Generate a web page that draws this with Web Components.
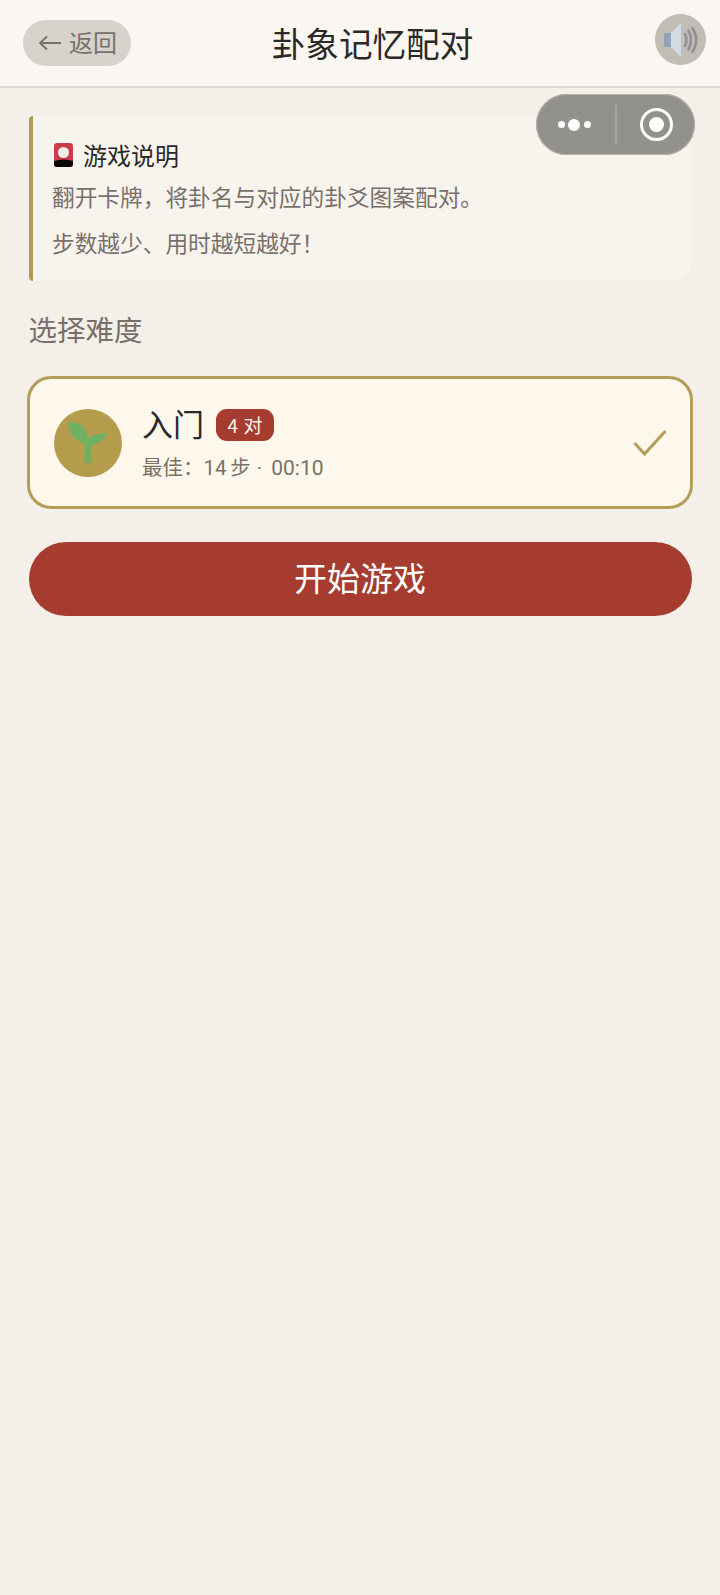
<!DOCTYPE html>
<html lang="zh"><head><meta charset="utf-8"><style>
html,body{margin:0;height:100%}
body{background:#f4f0e9;font-family:"Noto Sans CJK SC","Noto Sans",sans-serif;width:720px;min-height:1595px;position:relative}
</style></head><body>
<memory-app></memory-app>
<script>
function def(name,html){customElements.define(name,class extends HTMLElement{constructor(){super();this.attachShadow({mode:'open'}).innerHTML=html}})}
def('app-header',`<style>
:host{display:flex;box-sizing:border-box;height:88px;background:#faf7f2;border-bottom:2px solid #ded8cf;align-items:center;justify-content:space-between;padding:0 14px 0 23px;position:relative}
.back{display:flex;align-items:center;gap:8px;box-sizing:border-box;width:108px;height:46px;margin-top:-1px;border-radius:23px;background:#d6d2cc;color:#7a706a;font-size:24px;padding-left:15px}
.back svg{display:block}
.back span{margin-top:-2px}
h1{position:absolute;left:25px;right:0;top:18px;margin:0;text-align:center;font-weight:400;font-size:33.600px;line-height:50px;color:#2b2926;pointer-events:none}
.snd{width:51px;height:51px;border-radius:50%;background:#c1bdb6;margin-top:-7px;display:flex}
</style>
<div class="back"><svg width="23" height="16" viewBox="0 0 23 16" fill="none" stroke="#7a706a" stroke-width="1.800"><path d="M23 8H1.500M9 1.500L2 8l7 6.500"/></svg><span>返回</span></div>
<h1>卦象记忆配对</h1>
<div class="snd"><svg width="51" height="51" viewBox="0 0 51 51" fill="none"><rect x="9" y="19" width="7" height="14" fill="#8fa4b8"/><path d="M16 19L26 9V43L16 33Z" fill="#d0dbe3"/><g stroke="#8e9296" stroke-width="2.600" stroke-linecap="round"><path d="M30 20q3 6 0 12"/><path d="M33.500 16.500q5 9.500 0 19"/><path d="M37.500 14q7.500 12 0 24"/></g></svg></div>`);
def('mp-capsule',`<style>
:host{position:absolute;left:536px;top:94px;width:159px;height:61px;border-radius:31px;background:#93918b;box-shadow:0 0 0 1px #b5b2ab inset;display:flex;align-items:center}
.l{width:76px;padding-right:3px;display:flex;justify-content:center;align-items:center;gap:3.500px}
i{display:block;border-radius:50%;background:#fff}
.sep{width:2px;height:40px;background:#aaa8a2}
.r{flex:1;display:flex;justify-content:center}
.o{width:33px;height:33px;box-sizing:border-box;border:3.500px solid #fff;border-radius:50%;display:flex;align-items:center;justify-content:center}
.o i{width:15px;height:15px}
</style>
<div class="l"><i style="width:7px;height:7px"></i><i style="width:12px;height:12px"></i><i style="width:7px;height:7px"></i></div><div class="sep"></div><div class="r"><div class="o"><i></i></div></div>`);
def('info-card',`<style>
:host{display:block;box-sizing:border-box;height:165px;background:#f7f4ee;border-left:4px solid #b59b50;border-radius:4px 20px 20px 4px;padding:23px 0 0 19.500px;color:#7a706a;font-size:22.700px}
.t{display:flex;align-items:center;gap:10px;color:#2b2926;font-size:24px;line-height:32px;height:32px;padding-left:2px}
p{margin:0;line-height:36px}
.a{margin-top:8px}.b{margin-top:10px}
</style>
<div class="t"><svg width="19" height="24" viewBox="0 0 19 24"><rect width="19" height="24" rx="3" fill="#cc3d4b"/><circle cx="9.500" cy="9.500" r="5.500" fill="#f6efe8"/><path d="M0 18Q9.500 15 19 18V21a3 3 0 0 1-3 3H3a3 3 0 0 1-3-3Z" fill="#0a0606"/></svg><span>游戏说明</span></div>
<p class="a">翻开卡牌，将卦名与对应的卦爻图案配对。</p>
<p class="b">步数越少、用时越短越好！</p>`);
def('level-card',`<style>
:host{display:flex;box-sizing:border-box;height:133px;width:666px;margin-left:-1.500px;background:#fef8ec;border:3px solid #b59d58;border-radius:24px;align-items:center;padding:0 24px 0 24px}
.ic{width:68px;height:68px;border-radius:50%;background:#b59b4c;flex:none}
.ic svg{display:block}
.m{margin-left:20px;flex:1}
.n{display:flex;align-items:center;gap:12px;color:#2b2926;font-size:31px;line-height:40px;height:40px}
.tag{background:#a63c2f;color:#fdf3ea;font-size:19px;line-height:32px;height:32px;width:58px;border-radius:11px;text-align:center;margin-top:3px;word-spacing:1px}
.s{color:#7a706a;font-size:20.500px;line-height:30px;margin:10px 0 -1px;font-family:Roboto,"Noto Sans CJK SC",sans-serif}
.s .d{margin:0 4px 0 1px}.s .t{font-size:21px}.s .w{margin-left:-1.500px}
</style>
<div class="ic"><svg width="68" height="68" viewBox="0 0 68 68"><g fill="#6fb163" stroke="#86a85a" stroke-width=".6"><path d="M31 54V38Q30 35 29 33Q22 32 19 27Q16 21 14 14Q24 12 29 18Q33 24 34 30Q37 26 42 26Q47 24 54 24Q49 33 40 35L37 38V54Z"/></g></svg></div>
<div class="m"><div class="n"><span>入门</span><span class="tag">4 对</span></div><div class="s">最佳：14 <span class="w">步</span> <span class="d">·</span> <span class="t">00:10</span></div></div>
<svg width="34" height="28" viewBox="0 0 34 28" fill="none" stroke="#b59d58" stroke-width="3" style="margin-right:-1px"><path d="M1.500 14L11.500 25L32.500 2"/></svg>`);
def('start-button',`<style>
:host{display:flex;box-sizing:border-box;height:74px;padding-bottom:5px;background:#a63c2f;border-radius:37px;align-items:center;justify-content:center;color:#fff;font-size:33px;font-family:inherit}
</style><slot></slot>`);
def('memory-app',`<style>
:host{display:block}
main{padding:28px 28.500px 0 28.500px}
h2{margin:28px 0 0;font-weight:400;font-size:28.500px;line-height:40px;color:#7a706a}
level-card{margin-top:27px}
start-button{margin-top:33px}
</style>
<app-header></app-header><mp-capsule></mp-capsule>
<main><info-card></info-card><h2>选择难度</h2><level-card></level-card><start-button>开始游戏</start-button></main>`);
</script></body></html>
